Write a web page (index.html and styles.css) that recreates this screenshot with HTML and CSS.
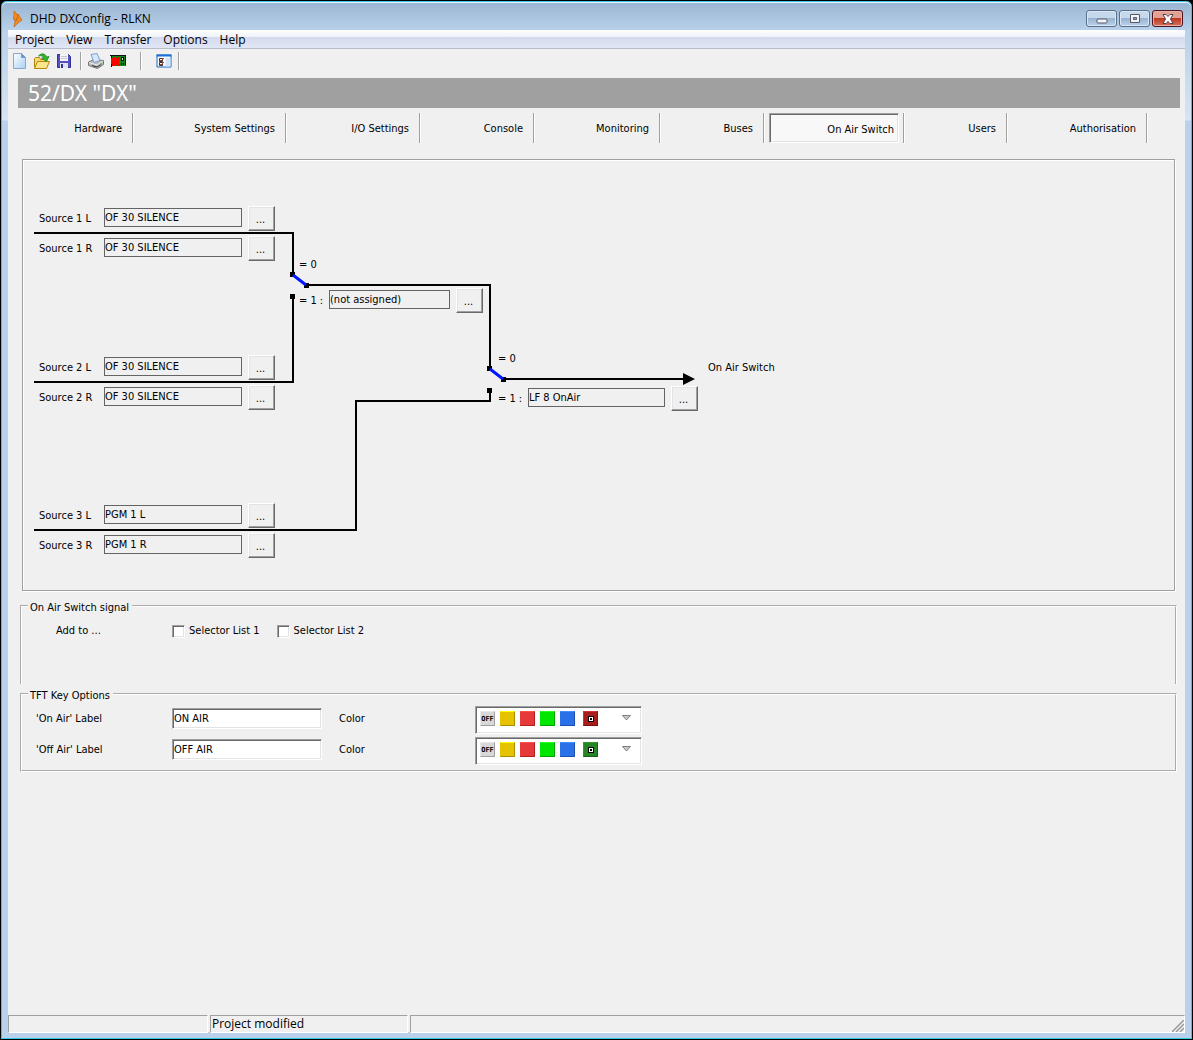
FILE: index.html
```html
<!DOCTYPE html>
<html lang="en">
<head>
    <meta charset="utf-8">
    <title>DHD DXConfig - RLKN</title>
    <link rel="stylesheet" href="styles.css">
</head>
<body>
    <div class="window">
        <header class="title-bar">
            <svg class="app-icon" width="10" height="16" viewBox="0 0 10 16">
                <path d="M1 0l4 4v3l-2 1 1 2-3-1-1-2 1-2z" fill="#f58a1c" stroke="#b85a08" stroke-width=".6"/>
                <path d="M5 3l4 6-4 3-4 4 1-6 2-1z" fill="#f58a1c" stroke="#b85a08" stroke-width=".6"/>
            </svg>
            <span class="title-text">DHD DXConfig - RLKN</span>
            <div class="window-buttons">
                <button class="win-btn" aria-label="Minimize">
                    <svg width="12" height="10"><rect x="1" y="5" width="10" height="4" rx="1" fill="#f4f4f4" stroke="#555a6b"/></svg>
                </button>
                <button class="win-btn" aria-label="Maximize">
                    <svg width="12" height="10"><path d="M1.500.5h9v8h-9z" fill="#f4f4f4" stroke="#555a6b"/><path d="M4.500 3.500h3v2h-3z" fill="#8fa9c8" stroke="#555a6b"/></svg>
                </button>
                <button class="win-btn close" aria-label="Close">
                    <svg width="12" height="10"><path d="M1 .5h3l2 2 2-2h3L8.500 5l2.500 4.500H8l-2-2-2 2H1L3.500 5z" fill="#fff" stroke="#53404c"/></svg>
                </button>
            </div>
        </header>

        <div class="client">
            <nav class="menu-bar">
                <button>Project</button>
                <button>View</button>
                <button>Transfer</button>
                <button>Options</button>
                <button>Help</button>
            </nav>

            <div class="toolbar">
                <button aria-label="New">
                    <svg width="16" height="16">
                        <defs><linearGradient id="page" x2="1" y2="1"><stop offset="0" stop-color="#fff"/><stop offset="1" stop-color="#a8d0f4"/></linearGradient></defs>
                        <path d="M1.500.5h8l4 4v11h-12z" fill="url(#page)" stroke="#8ba6c8"/>
                        <path d="M9.500.5v4h4z" fill="#5f9bdc" stroke="#7a9cc8"/>
                    </svg>
                </button>
                <button aria-label="Open">
                    <svg width="17" height="16">
                        <path d="M.5 14.500v-9l1-1h4l1 2h6v3" fill="#f8d873" stroke="#b8860b"/>
                        <path d="M.5 15.500l3-7h12l-3 7z" fill="#ffe68c" stroke="#b8860b"/>
                        <path d="M4.500 3C7 0 11 0 12.500 4l2.500-.5-2.500 5-5-3.500 2.500-.3C9 2.500 7 2.500 4.500 3z" fill="#35b52c" stroke="#147a14" stroke-width=".7"/>
                    </svg>
                </button>
                <button aria-label="Save">
                    <svg width="16" height="16">
                        <path d="M1.500 1.500h11l2 2v11h-13z" fill="#5450bd" stroke="#35329a"/>
                        <path d="M4 1h8v7H4z" fill="#f5f5fa"/>
                        <path d="M5 3.500h6M5 5.500h6" stroke="#c4c4d0"/>
                        <path d="M4 10h8v5H4z" fill="#e2e2ee"/>
                        <path d="M5 11h2v4H5z" fill="#35329a"/>
                    </svg>
                </button>
                <span class="separator first"></span>
                <button aria-label="Print">
                    <svg width="17" height="16">
                        <path d="M.5 9l5-2.500 10 1v4l-6 4-9-3z" fill="#b9b9b9" stroke="#777"/>
                        <path d="M3 1.500l6-1 3 7-6 2z" fill="#d6e8fc" stroke="#7f9dd0"/>
                        <path d="M1 9.500l8 2.500 6-4" fill="none" stroke="#eee"/>
                        <path d="M4 12.500l5 1.500 4-2.500" fill="none" stroke="#333"/>
                        <path d="M12 11h2" stroke="#2fb92f"/>
                    </svg>
                </button>
                <button aria-label="Transfer to device">
                    <svg width="17" height="16" shape-rendering="crispEdges">
                        <path d="M1 2h15v11H1z" fill="#168516"/>
                        <path d="M0 2h16v1H0zM1 3h1v11H1zM15 3h1v9h-1z" fill="#111"/>
                        <path d="M1 5h2v-1h2v1h2v-1h3v3h-1v4h1v2H7v-1H5v1H2v-2H1z" fill="#f00"/>
                        <path d="M11 4h3v4h-3z" fill="#111"/>
                        <path d="M12 5h1v2h-1z" fill="#ddd"/>
                        <path d="M11 10h1v2h-1zM13 10h1v2h-1z" fill="#111"/>
                    </svg>
                </button>
                <span class="separator wide"></span>
                <button aria-label="Options list">
                    <svg width="16" height="16">
                        <path d="M1 2h14v12H1z" fill="#f7faff" stroke="#1769c5"/>
                        <path d="M.5 1.500h15v2H.5z" fill="#1c70d6"/>
                        <path d="M9.500 5h5v8.500h-5z" fill="#d3e4fa"/>
                        <path d="M3.500 5.500h3v3h-3zM3.500 9.500h3v3h-3z" fill="#fff" stroke="#333"/>
                        <path d="M4 7l1 1 3-3M4 11l1 1 3-3" fill="none" stroke="#b43a1c"/>
                    </svg>
                </button>
                <span class="separator"></span>
            </div>

            <h1 class="device-title">52/DX "DX"</h1>

            <nav class="tabs">
                <button class="tab">Hardware</button>
                <button class="tab">System Settings</button>
                <button class="tab">I/O Settings</button>
                <button class="tab">Console</button>
                <button class="tab">Monitoring</button>
                <button class="tab">Buses</button>
                <div class="tab-slot"><button class="tab-active">On Air Switch</button></div>
                <button class="tab">Users</button>
                <button class="tab">Authorisation</button>
            </nav>

            <main class="content">
                <section class="diagram">
                    <svg class="wires" width="720" height="420">
                        <g fill="none" stroke="#000" stroke-width="2" shape-rendering="crispEdges">
                            <path d="M11 73h259v42"/>
                            <path d="M11 222h259v-86"/>
                            <path d="M284 125h183v84"/>
                            <path d="M11 370h322V241h134v-10"/>
                            <path d="M480 219h182"/>
                        </g>
                        <path d="M660 213l12 6-12 6z"/>
                        <g shape-rendering="crispEdges">
                            <rect x="267" y="112" width="5" height="5"/>
                            <rect x="281" y="123" width="5" height="5"/>
                            <rect x="267" y="134" width="5" height="5"/>
                            <rect x="464" y="206" width="5" height="5"/>
                            <rect x="478" y="217" width="5" height="5"/>
                            <rect x="464" y="228" width="5" height="5"/>
                        </g>
                        <path d="M270 115l13 10M467 209l13 10" stroke="#0018ff" stroke-width="3"/>
                    </svg>

                    <div class="node source-1">
                        <div class="source"><label for="s1l">Source 1 L</label><input id="s1l" value="OF 30 SILENCE" readonly><button>...</button></div>
                        <div class="source"><label for="s1r">Source 1 R</label><input id="s1r" value="OF 30 SILENCE" readonly><button>...</button></div>
                    </div>
                    <div class="node source-2">
                        <div class="source"><label for="s2l">Source 2 L</label><input id="s2l" value="OF 30 SILENCE" readonly><button>...</button></div>
                        <div class="source"><label for="s2r">Source 2 R</label><input id="s2r" value="OF 30 SILENCE" readonly><button>...</button></div>
                    </div>
                    <div class="node source-3">
                        <div class="source"><label for="s3l">Source 3 L</label><input id="s3l" value="PGM 1 L" readonly><button>...</button></div>
                        <div class="source"><label for="s3r">Source 3 R</label><input id="s3r" value="PGM 1 R" readonly><button>...</button></div>
                    </div>

                    <span class="node switch-1-off">= 0</span>
                    <div class="node switch-1-on">
                        <div class="source logic"><label for="l1">= 1 :</label><input id="l1" class="short" value="(not assigned)" readonly><button>...</button></div>
                    </div>
                    <span class="node switch-2-off">= 0</span>
                    <div class="node switch-2-on">
                        <div class="source logic"><label for="l2">= 1 :</label><input id="l2" class="medium" value="LF 8 OnAir" readonly><button>...</button></div>
                    </div>
                    <span class="node output">On Air Switch</span>
                </section>

                <fieldset class="group signal">
                    <legend>On Air Switch signal</legend>
                    <div class="signal-row">
                        <span class="add-to">Add to ...</span>
                        <label><input type="checkbox">Selector List 1</label>
                        <label><input type="checkbox">Selector List 2</label>
                    </div>
                </fieldset>

                <fieldset class="group keys">
                    <legend>TFT Key Options</legend>
                    <div class="key-grid">
                        <label for="on-label">'On Air' Label</label>
                        <input type="text" id="on-label" value="ON AIR">
                        <span>Color</span>
                        <div class="color-list">
                            <button class="swatch off">OFF</button>
                            <button class="swatch yellow" aria-label="Yellow"></button>
                            <button class="swatch red" aria-label="Red"></button>
                            <button class="swatch green" aria-label="Green"></button>
                            <button class="swatch blue" aria-label="Blue"></button>
                            <button class="swatch current dark-red" aria-label="Dark red"></button>
                            <button class="drop" aria-label="More colors"><svg width="9" height="6"><path d="M.5.5h8l-4 4.500z" fill="#c8c8c8" stroke="#808080"/></svg></button>
                        </div>
                        <label for="off-label">'Off Air' Label</label>
                        <input type="text" id="off-label" value="OFF AIR">
                        <span>Color</span>
                        <div class="color-list">
                            <button class="swatch off">OFF</button>
                            <button class="swatch yellow" aria-label="Yellow"></button>
                            <button class="swatch red" aria-label="Red"></button>
                            <button class="swatch green" aria-label="Green"></button>
                            <button class="swatch blue" aria-label="Blue"></button>
                            <button class="swatch current dark-green" aria-label="Dark green"></button>
                            <button class="drop" aria-label="More colors"><svg width="9" height="6"><path d="M.5.5h8l-4 4.500z" fill="#c8c8c8" stroke="#808080"/></svg></button>
                        </div>
                    </div>
                </fieldset>
            </main>

            <footer class="status-bar">
                <div class="status"></div>
                <div class="status">Project modified</div>
                <div class="status last">
                    <svg width="12" height="12"><path d="M0 12L12 0M4 12l8-8M8 12l4-4" stroke="#999" stroke-width="1.500"/></svg>
                </div>
            </footer>
        </div>
    </div>
</body>
</html>
```

FILE: styles.css
```css
* {
    box-sizing: border-box;
}

body {
    margin: 0;
    background-color: #000;
    color: #000;
    font-family: "DejaVu Sans Condensed", "DejaVu Sans", sans-serif;
    font-size: 11px;
    line-height: 14px;
}

button, input {
    font: inherit;
    color: inherit;
    margin: 0;
    padding: 0;
    border: none;
    border-radius: 0;
    background: none;
}

/* window frame */
.window {
    display: flex;
    flex-direction: column;
    min-height: 100vh;
    padding: 1px 7px 7px;
    border: 1px solid #000;
    border-radius: 7px 7px 0 0;
    background: linear-gradient(#99b4d1, #b9d1ea 30px, #d6e4f4 119px, #b9d1ea 120px);
    box-shadow: inset 0 0 0 1px #35c8e8, inset 0 1px 0 1px #e8f2fb;
}

.title-bar {
    display: flex;
    align-items: center;
    height: 28px;
    padding: 5px 2px 0 5px;
    font-family: "Open Sans", sans-serif;
    font-size: 12px;
}

.title-text {
    flex: 1;
    margin-left: 7px;
}

.window-buttons {
    display: flex;
    gap: 2px;
}

.win-btn {
    display: flex;
    align-items: center;
    justify-content: center;
    width: 31px;
    height: 17px;
    border: 1px solid #5c6f8a;
    border-radius: 3px;
    background: linear-gradient(#c6d8eb 45%, #98b3d1 50%, #bcd2ea);
    box-shadow: inset 0 0 0 1px #dbe7f4;
}

.win-btn.close {
    border-color: #4c1420;
    background: linear-gradient(#e2a293 45%, #bd3a22 50%, #d8705c);
    box-shadow: inset 0 0 0 1px #e8b0a5;
}

.client {
    display: flex;
    flex-direction: column;
    flex: 1;
    background-color: #f0f0f0;
}

/* menu and toolbar */
.menu-bar {
    display: flex;
    gap: 12px;
    height: 19px;
    padding: 2px 7px 0;
    border-bottom: 1px solid #b6bccc;
    background: linear-gradient(#fff, #eef1f9 40%, #d4dbed 41%, #e1e6f6);
    font-family: "Open Sans", sans-serif;
    font-size: 12px;
}

.toolbar {
    display: flex;
    align-items: center;
    gap: 6px;
    height: 27px;
    padding: 0 4px 3px;
}

.toolbar button {
    width: 16px;
    height: 16px;
}

.toolbar svg {
    display: block;
}

.separator {
    width: 2px;
    height: 18px;
    border-left: 1px solid #a0a0a0;
    border-right: 1px solid #fff;
}

.separator.first {
    margin-left: 2px;
}

.separator.wide {
    margin: 0 8px;
}

.device-title {
    margin: 2px 5px 5px 10px;
    padding: 0 10px;
    background-color: #a0a0a0;
    color: #fff;
    font-family: "Noto Sans", sans-serif;
    font-size: 21px;
    font-weight: normal;
    line-height: 30px;
}

/* page tabs */
.tabs {
    display: grid;
    grid-template-columns: 116px 153px 134px 114px 126px 104px 140px 103px 140px;
    height: 30px;
    margin: 0 10px;
}

.tab {
    padding: 2px 11px 0 0;
    border-right: 1px solid #fff;
    box-shadow: inset -1px 0 #a0a0a0;
    text-align: right;
}

.tab-slot {
    display: flex;
    padding: 0 5px 0 4px;
    border-right: 1px solid #fff;
    box-shadow: inset -1px 0 #a0a0a0;
}

.tab-active {
    flex: 1;
    padding: 3px 4px 0 0;
    border: 1px solid;
    border-color: #a0a0a0 #fff #fff #a0a0a0;
    background-color: #f8f8f8;
    box-shadow: inset 1px 1px #696969, inset -1px -1px #e3e3e3;
    text-align: right;
}

.content {
    flex: 1;
    padding: 16px 8px 0 12px;
}

/* signal path */
.diagram {
    position: relative;
    height: 432px;
    margin: 0 2px 5px;
    border: 1px solid #a0a0a0;
    box-shadow: 1px 1px #fff, inset 1px 1px #fff;
}

.wires {
    position: absolute;
    left: 0;
    top: 0;
}

.node {
    position: absolute;
    white-space: nowrap;
}

.source-1 { left: 16px; top: 46px; }
.source-2 { left: 16px; top: 195px; }
.source-3 { left: 16px; top: 343px; }
.switch-1-off { left: 276px; top: 98px; }
.switch-1-on { left: 276px; top: 128px; }
.switch-2-off { left: 475px; top: 192px; }
.switch-2-on { left: 475px; top: 226px; }
.output { left: 685px; top: 201px; }

.source {
    display: flex;
    align-items: center;
    height: 25px;
    margin-bottom: 5px;
}

.source label {
    width: 65px;
}

.source.logic label {
    width: 30px;
}

.source input {
    width: 138px;
    height: 19px;
    margin: 0 6px 2px 0;
    padding: 0;
    border: 1px solid #646464;
}

.source input.short {
    width: 121px;
}

.source input.medium {
    width: 137px;
}

.source button {
    width: 27px;
    height: 25px;
    padding: 2px 2px 0 0;
    border: 1px solid;
    border-color: #fff #696969 #696969 #fff;
    box-shadow: inset -1px -1px #a0a0a0, inset 1px 1px #e3e3e3;
}

/* option groups */
.group {
    min-width: 0;
    margin: 0;
    padding: 0 14px;
    border: 2px groove #fff;
}

.group legend {
    margin-left: -8px;
    padding: 5px 3px 1px 2px;
}

.signal {
    height: 88px;
    border-bottom: none;
}

.signal-row {
    display: flex;
    align-items: center;
    gap: 17px;
    padding-top: 8px;
}

.add-to {
    width: 99px;
    margin-left: 20px;
}

.signal-row label {
    display: flex;
    align-items: center;
    gap: 4px;
}

.signal-row input {
    appearance: none;
    width: 13px;
    height: 13px;
}

.signal-row input,
.key-grid input,
.color-list {
    border: 1px solid;
    border-color: #a0a0a0 #fff #fff #a0a0a0;
    background-color: #fff;
    box-shadow: inset 1px 1px #696969, inset -1px -1px #e3e3e3;
}

.signal-row input:checked {
    background-color: #696969;
}

.keys {
    height: 88px;
}

.key-grid {
    display: grid;
    grid-template-columns: 136px 167px 136px 167px;
    align-items: center;
    row-gap: 3px;
    padding-top: 2px;
}

.key-grid label,
.key-grid span {
    margin-bottom: 3px;
}

.key-grid input {
    width: 150px;
    height: 21px;
    margin-bottom: 3px;
    padding: 0 1px;
}

.color-list {
    display: flex;
    gap: 5px;
    height: 28px;
    padding: 4px;
}

.swatch {
    width: 15px;
    height: 15px;
    border: 1px solid;
}

.swatch.off {
    border-color: #e8e8e8 #a0a0a0 #a0a0a0 #e8e8e8;
    background-color: #d8d8d8;
    font-family: "DejaVu Sans Mono", monospace;
    font-size: 7px;
    font-weight: bold;
    line-height: 12px;
}

.yellow { background-color: #e6c300; border-color: #ffff00 #a88e00 #a88e00 #e6c300; }
.red { background-color: #e63a3a; border-color: #ff5050 #b02020 #b02020 #e63a3a; }
.green { background-color: #00e600; border-color: #20ff20 #00a000 #00a000 #00e600; }
.blue { background-color: #2a70e6; border-color: #4090ff #1c50b0 #1c50b0 #2a70e6; }
.dark-red { background-color: #a81c1c; border-color: #d03030 #801010 #801010 #d03030; }
.dark-green { background-color: #268626; border-color: #309a30 #186018 #186018 #309a30; }

.current {
    display: flex;
    align-items: center;
    justify-content: center;
    margin-left: 3px;
}

/* white ring on black */
.current::after {
    content: "";
    width: 2px;
    height: 2px;
    border: 1px solid #fff;
    outline: 1px solid #000;
    background-color: #000;
}

.drop {
    display: flex;
    align-items: center;
    height: 14px;
    margin-left: 19px;
}

/* status bar */
.status-bar {
    display: grid;
    grid-template-columns: 200px 198px 1fr;
    gap: 2px;
    height: 17px;
    font-family: "Open Sans", sans-serif;
    font-size: 12px;
    line-height: 16px;
}

.status {
    padding-left: 1px;
    border: 1px solid;
    border-color: #a0a0a0 #fff #fff #a0a0a0;
}

.status.last {
    display: flex;
    align-items: flex-end;
    justify-content: flex-end;
}
```
